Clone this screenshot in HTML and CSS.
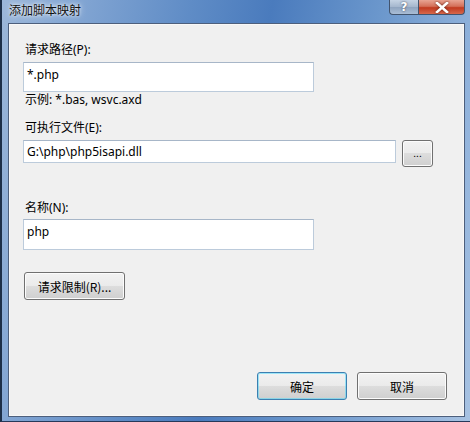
FILE: index.html
```html
<!DOCTYPE html>
<html lang="zh-CN">
<head>
<meta charset="utf-8">
<title>添加脚本映射</title>
<link rel="stylesheet" href="styles.css">
</head>
<body>
<div class="window">
  <div class="titlebar">
    <span class="title">添加脚本映射</span>
    <div class="caption-buttons">
      <div class="cap-btn help">?</div>
      <div class="cap-btn close">
        <svg width="14" height="11" viewBox="0 0 14 11"><path d="M2 1 L12 10 M12 1 L2 10" stroke="#fff" stroke-width="2.6" stroke-linecap="square"/></svg>
      </div>
    </div>
  </div>
  <div class="panel">
    <div class="label first">请求路径(P):</div>
    <div class="textbox tb1">*.php</div>
    <div class="hint">示例: *.bas, wsvc.axd</div>
    <div class="label second">可执行文件(E):</div>
    <div class="row">
      <div class="textbox tb2">G:\php\php5isapi.dll</div>
      <div class="btn browse">...</div>
    </div>
    <div class="label third">名称(N):</div>
    <div class="textbox tb3">php</div>
    <div class="btn limit">请求限制(R)...</div>
    <div class="footer">
      <div class="btn ok">确定</div>
      <div class="btn cancel">取消</div>
    </div>
  </div>
</div>
</body>
</html>
```

FILE: styles.css
```css
html, body {
  margin: 0;
  padding: 0;
}
body {
  width: 470px;
  height: 422px;
  overflow: hidden;
  font-family: "Noto Sans", "Noto Sans CJK SC", sans-serif;
  font-size: 12px;
  color: #000;
}
.window {
  width: 470px;
  height: 422px;
  box-sizing: border-box;
  display: flex;
  flex-direction: column;
  background: linear-gradient(100deg, #9cb7d9 0%, #86a8d4 12%, #5f8cc6 35%, #4a7bbd 50%, #6b97cc 70%, #93b4dc 90%, #a7c2e2 100%);
  border-left: 2px solid #1d2f48;
  border-bottom: 1px solid #26395a;
}
.titlebar {
  height: 23px;
  flex: none;
  display: flex;
  align-items: flex-start;
  justify-content: space-between;
}
.title {
  margin-left: 7px;
  margin-top: 2px;
  line-height: 16px;
  font-family: "Noto Sans CJK SC", sans-serif;
  font-size: 12px;
  color: #111;
  text-shadow: 0 0 6px rgba(255,255,255,0.9), 0 0 3px rgba(255,255,255,0.8);
}
.caption-buttons {
  display: flex;
  margin-right: 5px;
  height: 15px;
}
.cap-btn {
  height: 15px;
  box-sizing: border-box;
  border: 1px solid #42546e;
  border-top: none;
  display: flex;
  align-items: center;
  justify-content: center;
}
.help {
  width: 29px;
  border-radius: 0 0 0 4px;
  border-right: none;
  background: linear-gradient(#c5d3e4, #a4b6cd 50%, #8fa4bf 51%, #a9bdd6);
  color: #fff;
  font-family: "DejaVu Sans", sans-serif;
  font-weight: bold;
  font-size: 12px;
  line-height: 14px;
  text-shadow: 0 0 2px #334;
}
.close {
  width: 47px;
  border-radius: 0 0 4px 0;
  background: linear-gradient(#e8a493, #d4705a 45%, #c13a20 55%, #d7684c);
}
.close svg {
  filter: drop-shadow(0 0 1px #5a1a10);
}
.panel {
  flex: 1;
  margin: 0 5px 4px 6px;
  background: #f0f0f0;
  border: 1px solid #4d5f7c;
  box-shadow: inset 0 0 0 1px #ffffff80;
  display: flex;
  flex-direction: column;
  padding: 0 17px 16px 14px;
}
.label {
  line-height: 16px;
  padding-left: 2px;
}
.first { margin-top: 18px; }
.second { margin-top: 12px; }
.third { margin-top: 33px; }
.textbox {
  box-sizing: border-box;
  background: #fff;
  border: 1px solid #bccbdb;
  border-top-color: #a7b6c8;
  padding: 4px 3px 0;
  line-height: 16px;
  width: 291px;
}
.tb1 { height: 30px; margin-top: 4px; }
.hint { line-height: 16px; padding-left: 2px; }
.row {
  display: flex;
  gap: 6px;
  margin-top: 4px;
  align-items: flex-start;
}
.tb2 { width: 373px; height: 23px; padding-top: 3px; }
.tb3 { height: 31px; margin-top: 3px; }
.btn {
  box-sizing: border-box;
  border: 1px solid #707070;
  border-radius: 3px;
  background: linear-gradient(#f2f2f2 0%, #ebebeb 48%, #dddddd 50%, #cfcfcf 100%);
  box-shadow: inset 0 0 0 1px #fcfcfc;
  display: flex;
  align-items: center;
  justify-content: center;
  font-family: "Noto Sans CJK SC", sans-serif;
}
.browse {
  width: 31px;
  height: 27px;
  font-size: 10px;
  padding-bottom: 2px;
}
.limit {
  width: 101px;
  height: 28px;
  margin-top: 22px;
  margin-left: 1px;
}
.footer {
  margin-top: auto;
  display: flex;
  justify-content: flex-end;
  gap: 10px;
}
.ok, .cancel {
  width: 90px;
  height: 28px;
}
.ok {
  border-color: #3c7fb1;
  box-shadow: inset 0 0 0 1px #48d8fb80;
}
```
